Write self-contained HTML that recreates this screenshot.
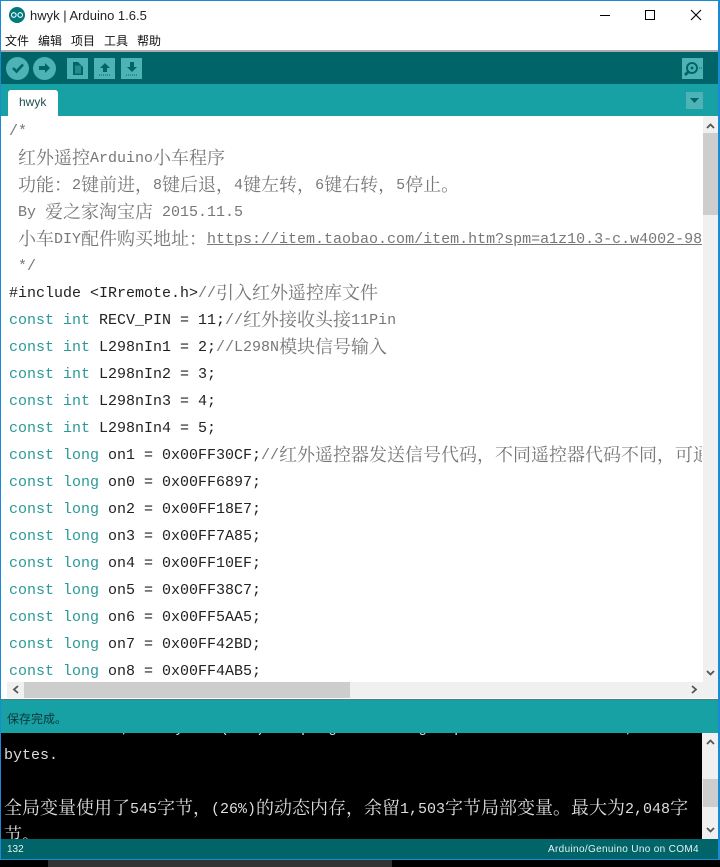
<!DOCTYPE html>
<html><head><meta charset="utf-8"><style>
*{margin:0;padding:0;box-sizing:border-box}
html,body{width:720px;height:867px;overflow:hidden;background:#000}
body{position:relative;font-family:"Liberation Sans","Noto Sans CJK SC",sans-serif}
.a{position:absolute}
.l{position:absolute;left:9px;height:27px;line-height:27px;font-family:"Liberation Mono",monospace;font-size:15px;color:#222;white-space:pre;width:693px;overflow:hidden}
.l b{font-weight:400;font-family:"Noto Serif CJK SC",serif;font-size:18px;line-height:0;position:relative;top:2px}
.g{color:#777}.k{color:#2a9a98}
.o{position:absolute;left:4px;font-family:"Liberation Mono",monospace;font-size:15px;color:#ddd;white-space:pre;line-height:27px;height:27px}
.o b{font-weight:400;font-family:"Noto Serif CJK SC",serif;font-size:18px;line-height:0;position:relative;top:1px}
.btn{position:absolute;top:58px;width:21px;height:21px;background:#4db3b5}
.circ{border-radius:50%;width:23px;height:23px;top:57px}
</style></head><body>
<div class="a" style="left:0;top:0;width:720px;height:860px;background:#fff"></div>
<!-- title -->
<svg class="a" style="left:9px;top:7px" width="16" height="16" viewBox="0 0 16 16"><circle cx="8" cy="8" r="8" fill="#00797d"/><circle cx="4.8" cy="8" r="2.3" fill="none" stroke="#fff" stroke-width="1.1"/><circle cx="11.2" cy="8" r="2.3" fill="none" stroke="#fff" stroke-width="1.1"/></svg>
<div class="a" style="left:30px;top:7px;font-size:13px;line-height:17px;color:#222;white-space:pre">hwyk | Arduino 1.6.5</div>
<svg class="a" style="left:590px;top:0" width="130" height="32" viewBox="0 0 130 32"><path d="M10 15.5H20" stroke="#000" stroke-width="1"/><rect x="55.5" y="10.5" width="9" height="9" fill="none" stroke="#000"/><path d="M101 10L111 20M111 10L101 20" stroke="#000" stroke-width="1.1"/></svg>
<div class="a" style="left:5px;top:32px;font-size:12px;line-height:18px;color:#111;white-space:pre">文件</div>
<div class="a" style="left:38px;top:32px;font-size:12px;line-height:18px;color:#111;white-space:pre">编辑</div>
<div class="a" style="left:71px;top:32px;font-size:12px;line-height:18px;color:#111;white-space:pre">项目</div>
<div class="a" style="left:104px;top:32px;font-size:12px;line-height:18px;color:#111;white-space:pre">工具</div>
<div class="a" style="left:137px;top:32px;font-size:12px;line-height:18px;color:#111;white-space:pre">帮助</div>
<div class="a" style="left:0;top:50px;width:720px;height:2px;background:#a8acac"></div>
<!-- toolbar -->
<div class="a" style="left:0;top:52px;width:720px;height:32px;background:#006468"></div>
<div class="a" style="left:0;top:84px;width:720px;height:32px;background:#17a1a5"></div>
<div class="btn circ" style="left:6px"></div>
<div class="btn circ" style="left:33px"></div>
<div class="btn" style="left:67px"></div>
<div class="btn" style="left:94px"></div>
<div class="btn" style="left:121px"></div>
<div class="btn" style="left:682px"></div>
<svg class="a" style="left:0;top:52px" width="720" height="32" viewBox="0 0 720 32">
<path d="M13 16L16.500 19.500L23 12.500" fill="none" stroke="#006468" stroke-width="2.600"/>
<path d="M39 14H45V11L50 16L45 21V18H39Z" fill="#006468"/>
<path d="M73 10H78L83 15V23H73Z" fill="#006468"/><path d="M75 14H81M75 16H81M75 18H81M75 20H81M76 14V22M78 14V22M80 14V22" stroke="#4db3b5" stroke-width=".6"/>
<path d="M105 11L110 16H107V20H103V16H100Z" fill="#006468"/><path d="M99 23H111" stroke="#006468" stroke-dasharray="1 1"/>
<path d="M130 10H134V15H137L132 20L127 15H130Z" fill="#006468"/><path d="M126 23H138" stroke="#006468" stroke-dasharray="1 1"/>
<circle cx="692" cy="16" r="5" fill="none" stroke="#006468" stroke-width="2"/><circle cx="692" cy="16" r="1.500" fill="#006468"/><path d="M688 20L685 23" stroke="#006468" stroke-width="3"/><path d="M699 16H702" stroke="#006468" stroke-dasharray="1 1"/>
</svg>
<!-- tab -->
<div class="a" style="left:8px;top:90px;width:50px;height:26px;background:#fff;border-radius:3px 3px 0 0"></div>
<div class="a" style="left:19px;top:94px;font-size:12px;line-height:16px;color:#1f4f50">hwyk</div>
<div class="a" style="left:686px;top:92px;width:17px;height:17px;background:#4db3b5"></div>
<svg class="a" style="left:686px;top:92px" width="17" height="17"><path d="M4 6H13L8.500 11Z" fill="#006468"/></svg>
<!-- editor -->
<div class="l g" style="top:118px">/*</div>
<div class="l g" style="top:145px"> <b>红外遥控</b>Arduino<b>小车程序</b></div>
<div class="l g" style="top:172px"> <b>功能：</b>2<b>键前进，</b>8<b>键后退，</b>4<b>键左转，</b>6<b>键右转，</b>5<b>停止。</b></div>
<div class="l g" style="top:199px"> By <b>爱之家淘宝店</b> 2015.11.5</div>
<div class="l g" style="top:226px"> <b>小车</b>DIY<b>配件购买地址：</b><u>https://item.taobao.com/item.htm?spm=a1z10.3-c.w4002-98</u></div>
<div class="l g" style="top:253px"> */</div>
<div class="l" style="top:280px">#include &lt;IRremote.h&gt;<span class="g">//<b>引入红外遥控库文件</b></span></div>
<div class="l" style="top:307px"><span class="k">const int</span> RECV_PIN = 11;<span class="g">//<b>红外接收头接</b>11Pin</span></div>
<div class="l" style="top:334px"><span class="k">const int</span> L298nIn1 = 2;<span class="g">//L298N<b>模块信号输入</b></span></div>
<div class="l" style="top:361px"><span class="k">const int</span> L298nIn2 = 3;</div>
<div class="l" style="top:388px"><span class="k">const int</span> L298nIn3 = 4;</div>
<div class="l" style="top:415px"><span class="k">const int</span> L298nIn4 = 5;</div>
<div class="l" style="top:442px"><span class="k">const long</span> on1 = 0x00FF30CF;<span class="g">//<b>红外遥控器发送信号代码，不同遥控器代码不同，可通</b></span></div>
<div class="l" style="top:469px"><span class="k">const long</span> on0 = 0x00FF6897;</div>
<div class="l" style="top:496px"><span class="k">const long</span> on2 = 0x00FF18E7;</div>
<div class="l" style="top:523px"><span class="k">const long</span> on3 = 0x00FF7A85;</div>
<div class="l" style="top:550px"><span class="k">const long</span> on4 = 0x00FF10EF;</div>
<div class="l" style="top:577px"><span class="k">const long</span> on5 = 0x00FF38C7;</div>
<div class="l" style="top:604px"><span class="k">const long</span> on6 = 0x00FF5AA5;</div>
<div class="l" style="top:631px"><span class="k">const long</span> on7 = 0x00FF42BD;</div>
<div class="l" style="top:658px;height:24px"><span class="k">const long</span> on8 = 0x00FF4AB5;</div>
<!-- editor scrollbars -->
<div class="a" style="left:703px;top:116px;width:15px;height:566px;background:#f0f0f0"></div>
<div class="a" style="left:703px;top:133px;width:15px;height:82px;background:#cdcdcd"></div>
<div class="a" style="left:7px;top:682px;width:711px;height:16px;background:#f0f0f0"></div>
<div class="a" style="left:24px;top:682px;width:326px;height:16px;background:#cdcdcd"></div>
<svg class="a" style="left:0;top:116px" width="720" height="590"><path d="M707 12L710.500 8.500L714 12M707 555L710.500 558.500L714 555M18 570L14 573.500L18 577M692 570L696 573.500L692 577" fill="none" stroke="#555" stroke-width="1.800"/></svg>
<!-- status -->
<div class="a" style="left:0;top:699px;width:720px;height:34px;background:#17a1a5;border-top:1px solid #4d7f82"></div>
<div class="a" style="left:7px;top:710px;font-size:12px;line-height:18px;color:#0c3637">保存完成。</div>
<!-- console -->
<div class="a" style="left:0;top:733px;width:720px;height:106px;background:#000;overflow:hidden">
<div class="o" style="top:-18px">Sketch uses 9,100 bytes (28%) of program storage space. Maximum is 32,256</div>
<div class="o" style="top:9px">bytes.</div>
<div class="o" style="top:63px"><b>全局变量使用了</b>545<b>字节，</b>(26%)<b>的动态内存，余留</b>1,503<b>字节局部变量。最大为</b>2,048<b>字</b></div>
<div class="o" style="top:90px"><b>节。</b></div>
<div class="a" style="left:702px;top:0;width:16px;height:106px;background:#f0f0f0"></div>
<div class="a" style="left:703px;top:46px;width:15px;height:28px;background:#cdcdcd"></div>
<svg class="a" style="left:702px;top:0" width="16" height="106"><path d="M5 11L8.500 7.500L12 11M5 95L8.500 98.500L12 95" fill="none" stroke="#555" stroke-width="1.800"/></svg>
</div>
<!-- footer -->
<div class="a" style="left:0;top:839px;width:720px;height:20px;background:#006468"></div>
<div class="a" style="left:7px;top:843px;font-size:10px;line-height:14px;color:#e6f2f2">132</div>
<div class="a" style="left:548px;top:843px;font-size:10px;line-height:14px;color:#e6f2f2;white-space:pre;letter-spacing:.34px">Arduino/Genuino Uno on COM4</div>
<!-- window border -->
<div class="a" style="left:0;top:0;width:1px;height:860px;background:#1a8ad4"></div>
<div class="a" style="left:718px;top:0;width:2px;height:860px;background:#1a8ad4"></div>
<div class="a" style="left:0;top:0;width:720px;height:1px;background:#1a8ad4"></div>
<div class="a" style="left:0;top:859px;width:720px;height:1px;background:#1a8ad4"></div>
<div class="a" style="left:48px;top:860px;width:344px;height:7px;background:#333"></div>
</body></html>
